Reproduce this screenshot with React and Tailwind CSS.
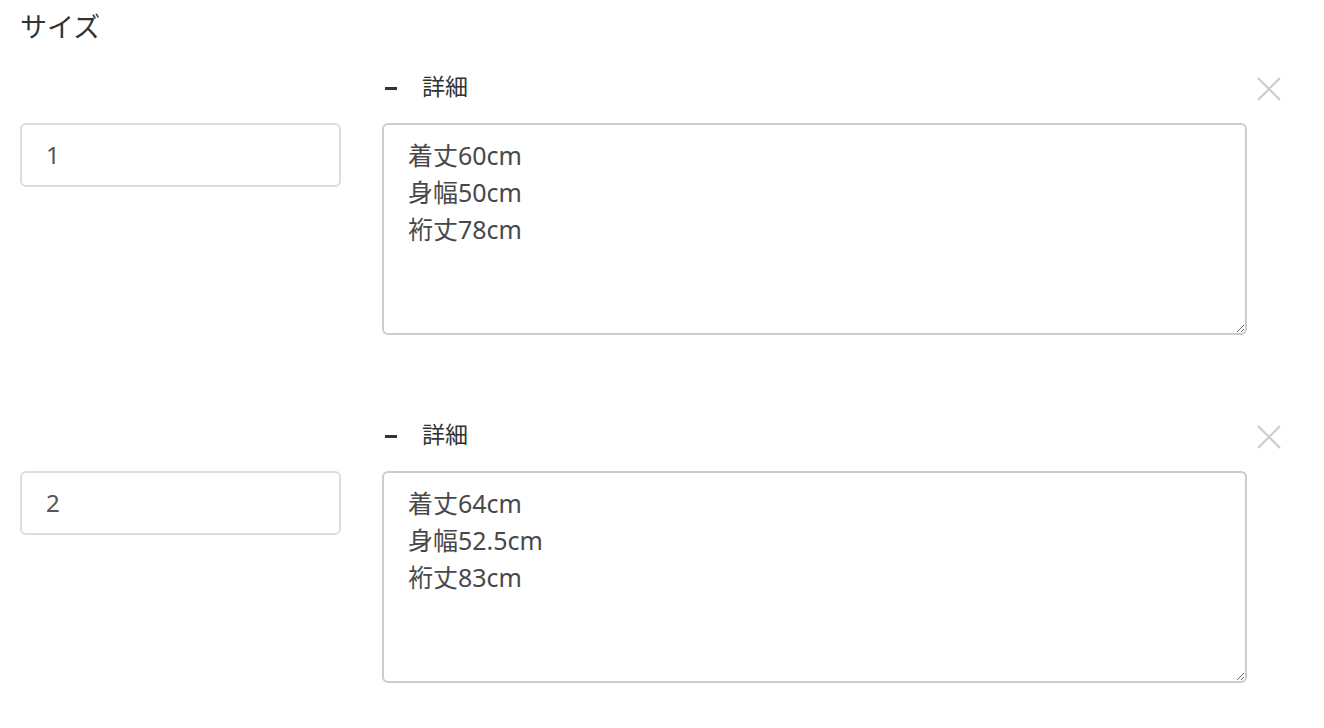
import React from "react";

const font = { fontFamily: '"Noto Sans", "Noto Sans CJK JP", sans-serif' };

function CloseIcon() {
  return (
    <svg width="26" height="26" viewBox="0 0 26 26" fill="none">
      <path d="M2 2L24 24M24 2L2 24" stroke="#cccccc" strokeWidth="2.2" />
    </svg>
  );
}

function Row({ num, text }) {
  return (
    <div className="flex items-start">
      <div className="w-[321px] pt-[61px] shrink-0">
        <input
          defaultValue={num}
          className="w-full h-[64px] border-2 border-[#dddddd] rounded-[6px] pl-[24px] pb-[2px] text-[24px] leading-[30px] text-[#555555] outline-none bg-white"
          style={font}
        />
      </div>
      <div className="ml-[41px] w-[865px] flex flex-col shrink-0">
        <div className="h-[47px] flex items-center">
          <span className="w-[12px] h-[3px] bg-[#333333] mt-[6px] ml-[3px]"></span>
          <span className="ml-[25px] text-[23px] leading-[30px] text-[#333333]" style={font}>
            詳細
          </span>
        </div>
        <textarea
          defaultValue={text}
          className="mt-[14px] w-full h-[212px] border-2 border-[#cccccc] rounded-[6px] px-[24px] pt-[12px] text-[25px] leading-[37px] text-[#484848] outline-none bg-white"
          style={font}
        />
      </div>
      <div className="ml-[9px] mt-[14px]">
        <CloseIcon />
      </div>
    </div>
  );
}

export default function App() {
  return (
    <div className="bg-white w-[1324px] h-[728px] overflow-hidden pl-[20px]" style={font}>
      <div className="pt-[10px] h-[62px] text-[27px] leading-[34px] text-[#333333]">サイズ</div>
      <div className="flex flex-col gap-[75px]">
        <Row num="1" text={"着丈60cm\n身幅50cm\n裄丈78cm"} />
        <Row num="2" text={"着丈64cm\n身幅52.5cm\n裄丈83cm"} />
      </div>
    </div>
  );
}
